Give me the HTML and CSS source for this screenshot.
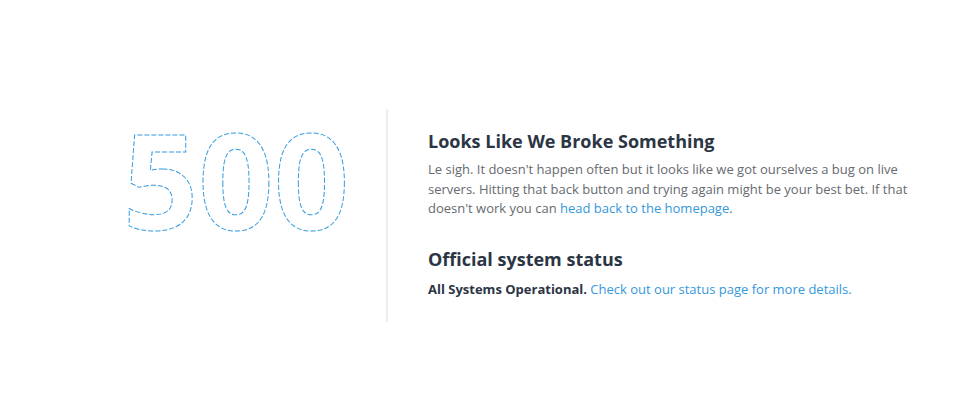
FILE: index.html
```html
<!DOCTYPE html>
<html lang="en">
<head>
<meta charset="utf-8">
<title>500 - Looks Like We Broke Something</title>
<link rel="stylesheet" href="styles.css">
</head>
<body>
<main class="page">
  <div class="error">
    <div class="error-code">
      <svg class="code-svg" width="300" height="160" viewBox="0 0 300 160">
        <text class="code-text" x="150" y="143" text-anchor="middle">500</text>
      </svg>
    </div>
    <div class="error-body">
      <h1 class="title">Looks Like We Broke Something</h1>
      <p class="text">Le sigh. It doesn't happen often but it looks like we got ourselves a bug on live servers. Hitting that back button and trying again might be your best bet. If that doesn't work you can <a class="link" href="#">head back to the homepage</a>.</p>
      <h2 class="title status-title">Official system status</h2>
      <p class="text status"><strong class="status-strong">All Systems Operational.</strong> <a class="link" href="#">Check out our status page for more details.</a></p>
    </div>
  </div>
</main>
</body>
</html>
```
FILE: styles.css
```css
html, body {
  margin: 0;
  padding: 0;
  background: #ffffff;
}
body {
  font-family: "Open Sans", "Liberation Sans", sans-serif;
  color: #666a70;
}
.page {
  padding: 109px 0 0 86px;
}
.error {
  display: flex;
  align-items: stretch;
}
.error-code {
  width: 300px;
  flex: none;
}
.code-svg {
  display: block;
  margin-top: -22px;
}
.code-text {
  font-family: "Open Sans", sans-serif;
  font-weight: 700;
  font-size: 132px;
  fill: none;
  stroke: #3a9ee0;
  stroke-width: 1;
  stroke-dasharray: 5 2;
}
.error-body {
  width: 482px;
  border-left: 2px solid #eeeeee;
  padding: 19px 0 23px 40px;
}
.title {
  margin: 0;
  font-size: 18px;
  font-weight: 700;
  line-height: 26px;
  color: #2b3544;
}
.text {
  margin: 6px 0 0;
  font-size: 13px;
  line-height: 19.5px;
  color: #666a70;
}
.status-title {
  margin-top: 27px;
}
.status {
  margin-top: 8px;
}
.status-strong {
  font-weight: 700;
  color: #2b3544;
}
.link {
  color: #3498db;
  text-decoration: none;
}
```
